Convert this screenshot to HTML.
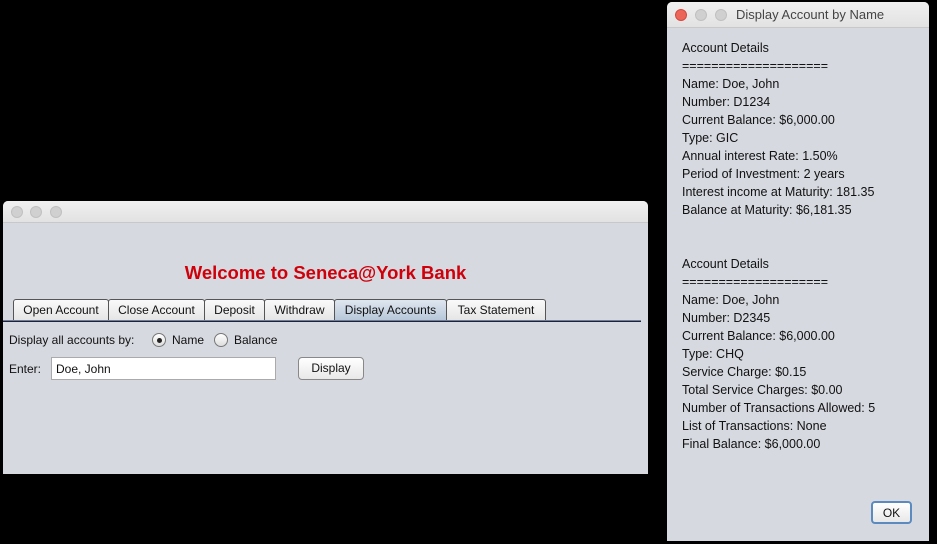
<!DOCTYPE html>
<html><head><style>
body{margin:0;width:937px;height:544px;background:#000;position:relative;overflow:hidden;font-family:"Liberation Sans",sans-serif;font-size:12px;color:#111}
.win{position:absolute;background:#d6d9e0;border-radius:5px 5px 0 0;overflow:hidden}
.tb{position:absolute;left:0;right:0;top:0;background:linear-gradient(#f0f0f0,#e2e2e2);border-bottom:1px solid #c8c8c8}
.dot{position:absolute;width:12px;height:12px;border-radius:50%;background:#d0d0d0;border:1px solid #c0c0c0;box-sizing:border-box}
.abs{position:absolute;white-space:nowrap}
.tab{position:absolute;top:299px;height:22px;border:1px solid #555;border-bottom:none;border-radius:3px 3px 0 0;background:linear-gradient(#fafafa,#e4e4e4);box-sizing:border-box;text-align:center;line-height:21px;font-size:12px;white-space:nowrap;overflow:hidden}
.btn{position:absolute;border:1px solid #888;border-radius:4px;background:linear-gradient(#fff,#e8e8e8);text-align:center;box-sizing:border-box}
.radio{position:absolute;width:14px;height:14px;border-radius:50%;border:1px solid #777;background:linear-gradient(#fff,#ddd);box-sizing:border-box}
</style></head><body>

<div class="win" style="left:3px;top:201px;width:645px;height:273px">
 <div class="tb" style="height:21px"></div>
 <div class="dot" style="left:8px;top:5px"></div>
 <div class="dot" style="left:27px;top:5px"></div>
 <div class="dot" style="left:47px;top:5px"></div>
 <div class="abs" style="left:0;width:645px;text-align:center;top:61px;color:#d0000a;font-weight:bold;font-size:18.5px">Welcome to Seneca@York Bank</div>
</div>
<div class="tab" style="left:13px;width:96px">Open Account</div>
<div class="tab" style="left:108px;width:97px">Close Account</div>
<div class="tab" style="left:204px;width:61px">Deposit</div>
<div class="tab" style="left:264px;width:71px">Withdraw</div>
<div class="tab" style="left:334px;width:113px;background:linear-gradient(#dfe6ef,#b5c6d8)">Display Accounts</div>
<div class="tab" style="left:446px;width:100px">Tax Statement</div>
<div class="abs" style="left:3px;top:320px;width:638px;height:1px;background:#6a7fa0"></div>
<div class="abs" style="left:3px;top:321px;width:638px;height:1px;background:#223"></div>
<div class="abs" style="left:9px;top:333px">Display all accounts by:</div>
<div class="radio" style="left:152px;top:333px"><div style="position:absolute;left:4px;top:4px;width:5px;height:5px;border-radius:50%;background:#222"></div></div>
<div class="abs" style="left:172px;top:333px">Name</div>
<div class="radio" style="left:214px;top:333px"></div>
<div class="abs" style="left:234px;top:333px">Balance</div>
<div class="abs" style="left:9px;top:362px">Enter:</div>
<div class="abs" style="left:51px;top:357px;width:225px;height:23px;background:#fff;border:1px solid #aaa;box-sizing:border-box;padding:4px 0 0 4px">Doe, John</div>
<div class="btn" style="left:298px;top:357px;width:66px;height:23px;line-height:21px">Display</div>

<div class="win" style="left:667px;top:2px;width:262px;height:539px">
 <div class="tb" style="height:25px"></div>
 <div class="dot" style="left:8px;top:7px;background:#ec6559;border-color:#d5483d"></div>
 <div class="dot" style="left:28px;top:7px"></div>
 <div class="dot" style="left:48px;top:7px"></div>
 <div class="abs" style="left:69px;top:5px;font-size:13px;color:#444">Display Account by Name</div>
 <div class="abs" style="left:15px;top:37px;line-height:18px;font-size:12.5px">Account Details<br>====================<br>Name: Doe, John<br>Number: D1234<br>Current Balance: $6,000.00<br>Type: GIC<br>Annual interest Rate: 1.50%<br>Period of Investment: 2 years<br>Interest income at Maturity: 181.35<br>Balance at Maturity: $6,181.35<br><br><br>Account Details<br>====================<br>Name: Doe, John<br>Number: D2345<br>Current Balance: $6,000.00<br>Type: CHQ<br>Service Charge: $0.15<br>Total Service Charges: $0.00<br>Number of Transactions Allowed: 5<br>List of Transactions: None<br>Final Balance: $6,000.00</div>
 <div class="btn" style="left:204px;top:499px;width:41px;height:23px;line-height:20px;border:2px solid #5a8ac0">OK</div>
</div>
</body></html>
